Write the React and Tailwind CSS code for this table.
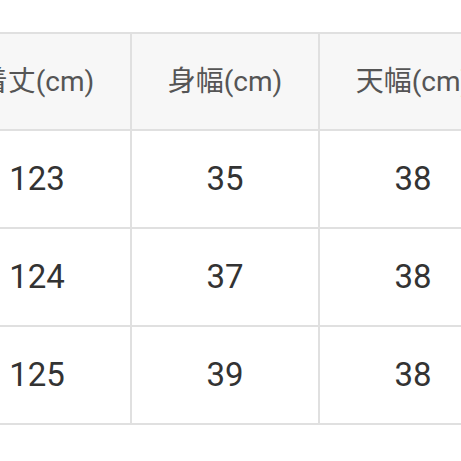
export default function App() {
  const header = ["着丈(cm)", "身幅(cm)", "天幅(cm)"];
  const rows = [
    ["123", "35", "38"],
    ["124", "37", "38"],
    ["125", "39", "38"],
  ];
  const font = { fontFamily: 'Roboto, "Noto Sans CJK JP", sans-serif' };
  return (
    <div className="w-[461px] h-[461px] overflow-hidden bg-white" style={font}>
      <div className="mt-[32px] ml-[-58px] w-[566px] grid grid-cols-[186px_186px_186px] gap-[2px] p-[2px] bg-[#e0e0e0]">
        {header.map((h) => (
          <div key={h} className="h-[95px] bg-[#f7f7f7] flex items-center justify-center text-[28px] text-[#555555]">
            {h}
          </div>
        ))}
        {rows.map((r, i) =>
          r.map((c, j) => (
            <div key={i + "-" + j} className="h-[96px] bg-white flex items-center justify-center text-[33px] text-[#333333]">
              {c}
            </div>
          ))
        )}
      </div>
    </div>
  );
}
